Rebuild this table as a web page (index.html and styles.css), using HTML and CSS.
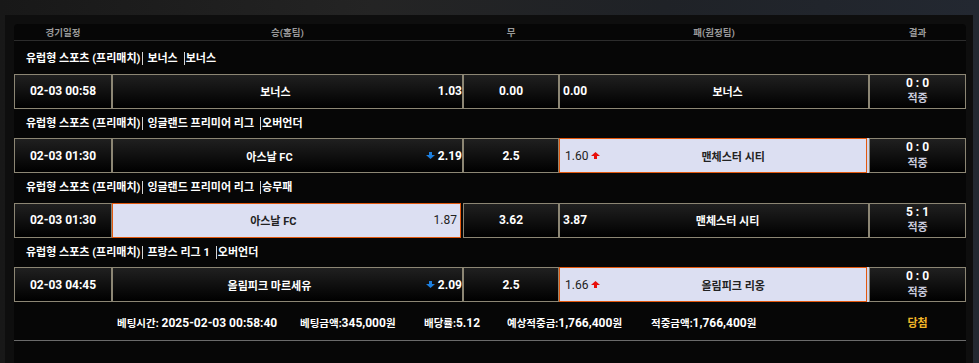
FILE: index.html
```html
<!DOCTYPE html>
<html lang="ko">
<head>
<meta charset="utf-8">
<title>베팅내역</title>
<link rel="stylesheet" href="styles.css">
</head>
<body>
<div class="page">
  <div class="panel">
    <div class="board">
      <div class="thead">
        <div>경기일정</div>
        <div>승(홈팀)</div>
        <div>무</div>
        <div>패(원정팀)</div>
        <div>결과</div>
      </div>
      <div class="tbody">
        <div class="group"><span>유럽형 스포츠 (프리매치)</span><span class="sep lg">보너스</span><span class="sep bt">보너스</span></div>
        <div class="row">
          <div class="cell time">02-03 00:58</div>
          <div class="cell home"><span class="name">보너스</span><span class="odd">1.03</span></div>
          <div class="cell draw">0.00</div>
          <div class="cell away"><span class="odd">0.00</span><span class="name">보너스</span></div>
          <div class="cell result"><span class="score">0 : 0</span><span class="status">적중</span></div>
        </div>

        <div class="group"><span>유럽형 스포츠 (프리매치)</span><span class="sep lg">잉글랜드 프리미어 리그</span><span class="sep bt">오버언더</span></div>
        <div class="row">
          <div class="cell time">02-03 01:30</div>
          <div class="cell home"><span class="name">아스날 FC</span><span class="odd"><svg class="arr down" viewBox="0 0 9 7" width="9" height="7"><path d="M3 0h3v3h3L4.5 7 0 3h3z"/></svg>2.19</span></div>
          <div class="cell draw">2.5</div>
          <div class="cell away sel"><span class="odd">1.60<svg class="arr up" viewBox="0 0 9 7" width="9" height="7"><path d="M4.5 0 9 4H6v3H3V4H0z"/></svg></span><span class="name">맨체스터 시티</span></div>
          <div class="cell result"><span class="score">0 : 0</span><span class="status">적중</span></div>
        </div>

        <div class="group"><span>유럽형 스포츠 (프리매치)</span><span class="sep lg">잉글랜드 프리미어 리그</span><span class="sep bt">승무패</span></div>
        <div class="row">
          <div class="cell time">02-03 01:30</div>
          <div class="cell home sel"><span class="name">아스날 FC</span><span class="odd">1.87</span></div>
          <div class="cell draw">3.62</div>
          <div class="cell away"><span class="odd">3.87</span><span class="name">맨체스터 시티</span></div>
          <div class="cell result"><span class="score">5 : 1</span><span class="status">적중</span></div>
        </div>

        <div class="group"><span>유럽형 스포츠 (프리매치)</span><span class="sep lg">프랑스 리그 1</span><span class="sep bt">오버언더</span></div>
        <div class="row">
          <div class="cell time">02-03 04:45</div>
          <div class="cell home"><span class="name">올림피크 마르세유</span><span class="odd"><svg class="arr down" viewBox="0 0 9 7" width="9" height="7"><path d="M3 0h3v3h3L4.5 7 0 3h3z"/></svg>2.09</span></div>
          <div class="cell draw">2.5</div>
          <div class="cell away sel"><span class="odd">1.66<svg class="arr up" viewBox="0 0 9 7" width="9" height="7"><path d="M4.5 0 9 4H6v3H3V4H0z"/></svg></span><span class="name">올림피크 리옹</span></div>
          <div class="cell result"><span class="score">0 : 0</span><span class="status">적중</span></div>
        </div>
      </div>

      <div class="summary">
        <div></div>
        <div class="items">
          <span class="item i1"><span class="k">베팅시간:</span> 2025-02-03 00:58:40</span>
          <span class="item i2"><span class="k">베팅금액:</span>345,000<span class="k">원</span></span>
          <span class="item i3"><span class="k">배당률:</span>5.12</span>
          <span class="item i4"><span class="k">예상적중금:</span>1,766,400<span class="k">원</span></span>
          <span class="item i5"><span class="k">적중금액:</span>1,766,400<span class="k">원</span></span>
        </div>
        <div class="win">당첨</div>
      </div>
    </div>
  </div>
</div>
</body>
</html>
```

FILE: styles.css
```css
* {
  box-sizing: border-box;
  margin: 0;
  padding: 0;
}

html,
body {
  height: 100%;
}

body {
  background: linear-gradient(90deg, #181818 0%, #242424 38%, #1f2227 68%, #232831 100%);
  font-family: Roboto, "Noto Sans CJK KR", sans-serif;
  font-weight: 700;
  color: #fff;
  overflow: hidden;
}

.page {
  height: 100%;
  padding: 15px 0 0 5px;
}

.panel {
  width: 968px;
  height: 100%;
  background: #0e0e0e;
  padding: 9px 7px 0 9px;
}

.board {
  width: 952px;
  height: 100%;
  background: #060606;
  border-radius: 4px 4px 0 0;
}

.thead {
  display: grid;
  grid-template-columns: 98px 351px 96px 310px 97px;
  height: 17px;
  border-bottom: 1px solid #2c2c2c;
  padding-top: 2px;
  font-size: 9.5px;
  line-height: 13px;
  color: #9a9a9a;
  text-align: center;
}

.tbody {
  padding-top: 3px;
}

.group {
  height: 29.5px;
  display: flex;
  align-items: center;
  padding-left: 12px;
  font-size: 11px;
}

.group span {
  line-height: 13px;
  white-space: pre;
}

.sep {
  border-left: 1px solid #d4d4d4;
}

.lg {
  margin-left: 2px;
  padding: 0 6px 0 4px;
}

.bt {
  padding-left: 1px;
}

.row {
  display: grid;
  grid-template-columns: 98px 351px 96px 310px 97px;
  height: 35px;
}

.cell {
  display: flex;
  align-items: center;
  border: 1px solid #8c8674;
  background: linear-gradient(#202020, #000);
  font-size: 12px;
  white-space: nowrap;
}

.time,
.draw {
  justify-content: center;
}

.name {
  flex: 1;
  text-align: center;
  font-size: 11px;
}

.odd {
  display: flex;
  align-items: center;
  gap: 3px;
}

.home .odd {
  padding-right: 0;
}

.away .odd {
  padding-left: 3px;
}

.arr {
  display: block;
}

.arr.down {
  fill: #1c7fe0;
}

.arr.up {
  fill: #e8100c;
}

.result {
  flex-direction: column;
  justify-content: center;
  line-height: 15.5px;
}

.status {
  font-size: 11px;
  color: #c8cadb;
}

.sel {
  background: #dcdff2;
  border-color: #e2580e;
  color: #222;
}

.sel .odd {
  font-weight: 400;
}

.home.sel {
  margin-right: 2px;
}

.home.sel .odd {
  padding-right: 3px;
}

.away.sel {
  margin-right: 2px;
  box-shadow: 2px 0 0 #d2d6e9;
}

.away.sel .odd {
  padding-left: 5px;
}

.summary {
  display: grid;
  grid-template-columns: 98px 757px 97px;
  height: 38.5px;
  padding-top: 3px;
  border-bottom: 1px solid #6a6a6a;
  align-items: center;
  font-size: 12px;
}

.items {
  display: flex;
  padding-left: 5px;
  white-space: nowrap;
}

.item {
  display: block;
}

.i1 {
  width: 183px;
}

.i2 {
  width: 124px;
}

.i3 {
  width: 83px;
}

.i4 {
  width: 144px;
}

.k {
  font-size: 10.5px;
}

.win {
  text-align: center;
  font-size: 11px;
  color: #f2b526;
}
```
